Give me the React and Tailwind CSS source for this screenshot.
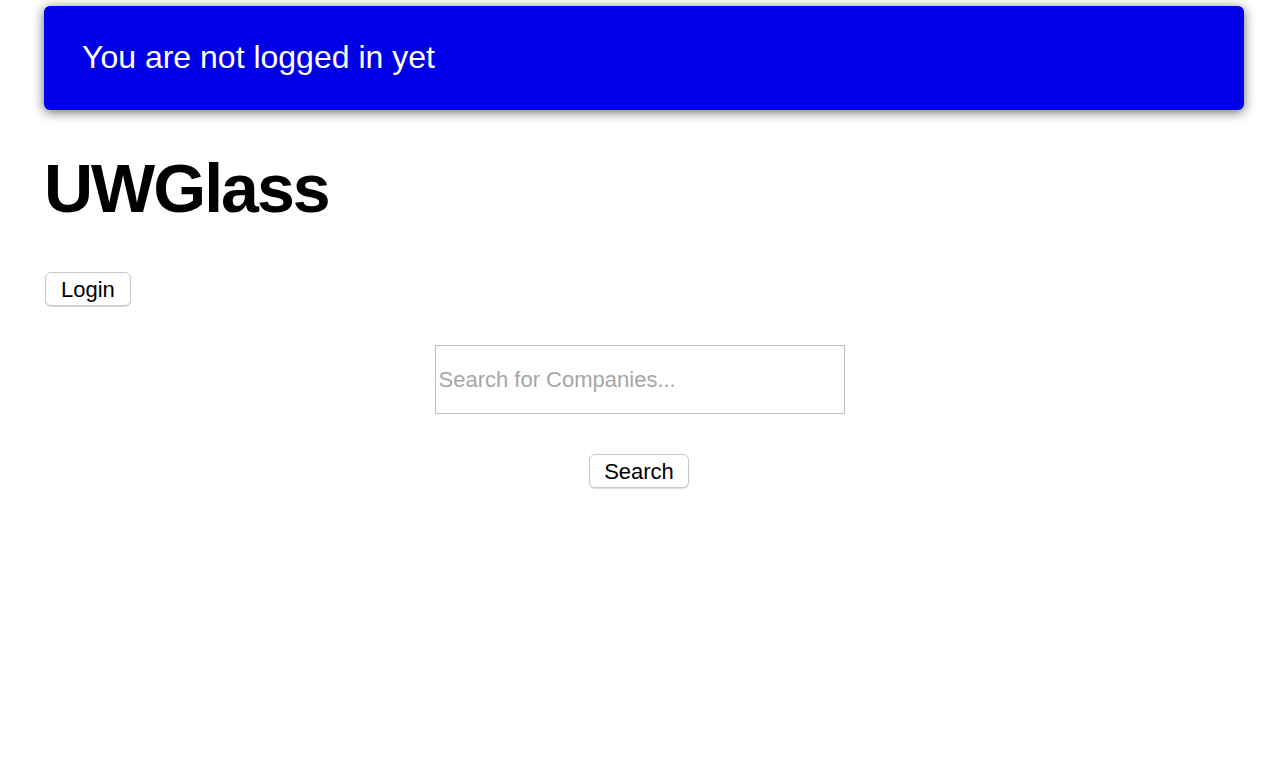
export default function App() {
  return (
    <div className="min-h-[758px] bg-white text-black" style={{ fontFamily: '"Liberation Sans", Arial, sans-serif' }}>
      <div className="px-[44px] pt-[6px]">
        <div className="w-[1200px] h-[104px] rounded-[6px] bg-[#0000e6] shadow-[0_2px_12px_rgba(0,0,0,0.6)] flex items-center pl-[38px] pb-[2px]">
          <span className="text-white text-[32px] leading-none">You are not logged in yet</span>
        </div>
        <h1 className="mt-[44px] h-[72px] text-[68px] font-bold leading-none tracking-[-2px]">UWGlass</h1>
        <button className="mt-[46px] ml-px h-[34px] px-[15px] pt-[2px] rounded-[6px] border border-[#c8c8c8] bg-white text-[22px] leading-none shadow-[0_1px_1px_rgba(0,0,0,0.15)]">
          Login
        </button>
      </div>
      <div className="flex flex-col items-center">
        <input
          type="text"
          placeholder="Search for Companies..."
          className="mt-[39px] ml-px w-[410px] h-[69px] border border-[#bdbdbd] px-[3px] text-[22px] outline-none placeholder:text-[#a6a6a6]"
        />
        <button className="mt-[40px] h-[34px] px-[14px] pt-[2px] rounded-[6px] border border-[#c8c8c8] bg-white text-[22px] leading-none shadow-[0_1px_1px_rgba(0,0,0,0.15)]">
          Search
        </button>
      </div>
    </div>
  );
}
